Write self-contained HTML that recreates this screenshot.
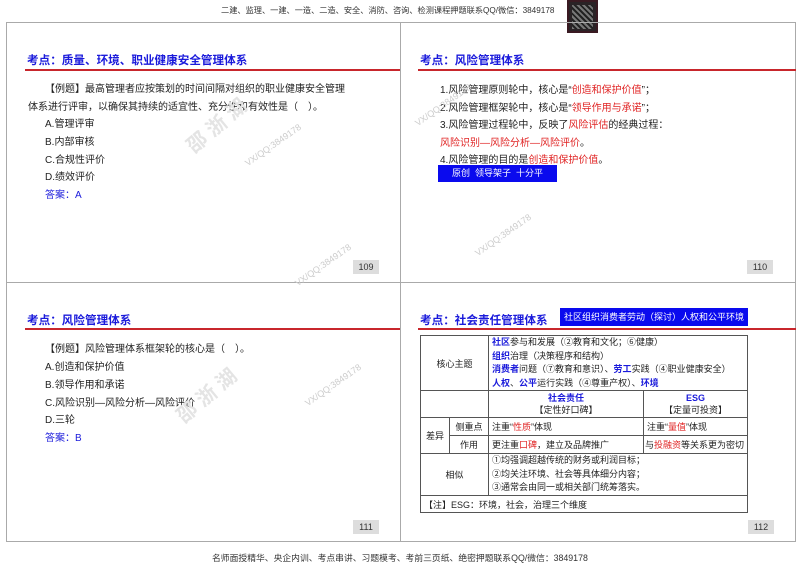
<!DOCTYPE html>
<html><head><meta charset="utf-8"><style>
*{margin:0;padding:0;box-sizing:border-box}
body{width:800px;height:566px;background:#fff;position:relative;overflow:hidden;font-family:"Liberation Sans","Noto Sans CJK SC",sans-serif;color:#222}
.a{position:absolute;white-space:nowrap}
.hdr{font-size:8.2px;color:#333;top:4px;left:221px}
.ftr{font-size:8.8px;color:#333;top:551px;left:212px}
.frame{position:absolute;left:6px;top:22px;width:790px;height:520px;border:1px solid #aaa}
.vl{position:absolute;left:400px;top:22px;width:1px;height:520px;background:#aaa}
.hl{position:absolute;left:6px;top:282px;width:790px;height:1px;background:#aaa}
.t{font-size:11.6px;font-weight:bold;color:#1a1adb}
.rl{position:absolute;height:2px;background:#c8262c}
.p{font-size:10px;color:#222}
.r{color:#e02424}
.b{color:#1a1adb;font-weight:bold}
.pg{position:absolute;background:#ddd;font-size:9px;color:#333;text-align:center;line-height:14px;width:26px;height:14px}
.box{position:absolute;background:#0a0aee;color:#fff;font-size:9px;text-align:center;white-space:nowrap}
table{position:absolute;left:420px;top:335px;width:327px;border-collapse:collapse;font-size:9px;table-layout:fixed}
td{border:1px solid #555;padding:0 3px;white-space:nowrap;overflow:hidden}
.wm{position:absolute;color:#ccc;font-size:9px;transform:rotate(-35deg);white-space:nowrap}
.wm2{position:absolute;color:#e4e4e4;font-size:20px;font-weight:bold;transform:rotate(-40deg);white-space:nowrap}
</style></head><body>
<div class="a hdr">二建、监理、一建、一造、二造、安全、消防、咨询、检测课程押题联系QQ/微信：3849178</div>
<div style="position:absolute;left:567px;top:0;width:31px;height:33px;background:#2a2326;border:2px solid #3a1a22"><div style="position:absolute;left:3px;top:3px;width:21px;height:24px;background:repeating-linear-gradient(45deg,#777 0 2px,#222 2px 4px)"></div></div>
<div class="frame"></div><div class="vl"></div><div class="hl"></div>

<!-- TL -->
<div class="a t" style="left:27px;top:52px">考点：质量、环境、职业健康安全管理体系</div>
<div class="rl" style="left:25px;top:69px;width:375px"></div>
<div class="a p" style="left:45px;top:80px">【例题】最高管理者应按策划的时间间隔对组织的职业健康安全管理</div>
<div class="a p" style="left:28px;top:98px">体系进行评审，以确保其持续的适宜性、充分性和有效性是（　）。</div>
<div class="a p" style="left:45px;top:115px">A.管理评审</div>
<div class="a p" style="left:45px;top:133px">B.内部审核</div>
<div class="a p" style="left:45px;top:151px">C.合规性评价</div>
<div class="a p" style="left:45px;top:168px">D.绩效评价</div>
<div class="a p" style="left:45px;top:186px;color:#1a1adb">答案：A</div>
<div class="pg" style="left:353px;top:260px">109</div>
<div class="wm" style="left:240px;top:140px">VX/QQ:3849178</div>
<div class="wm" style="left:290px;top:260px">VX/QQ:3849178</div>
<div class="wm2" style="left:180px;top:110px">邵 浙 湖</div>

<!-- TR -->
<div class="a t" style="left:420px;top:52px">考点：风险管理体系</div>
<div class="rl" style="left:418px;top:69px;width:378px"></div>
<div class="a p" style="left:440px;top:81px">1.风险管理原则轮中，核心是“<span class="r">创造和保护价值</span>”；</div>
<div class="a p" style="left:440px;top:99px">2.风险管理框架轮中，核心是“<span class="r">领导作用与承诺</span>”；</div>
<div class="a p" style="left:440px;top:116px">3.风险管理过程轮中，反映了<span class="r">风险评估</span>的经典过程：</div>
<div class="a p r" style="left:440px;top:134px">风险识别—风险分析—风险评价<span style="color:#222">。</span></div>
<div class="a p" style="left:440px;top:151px">4.风险管理的目的是<span class="r">创造和保护价值</span>。</div>
<div class="box" style="left:438px;top:165px;width:119px;height:17px;line-height:17px">原创&nbsp; 领导架子&nbsp; 十分平</div>
<div class="pg" style="left:747px;top:260px">110</div>
<div class="wm" style="left:410px;top:100px">VX/QQ:3849178</div>
<div class="wm" style="left:470px;top:230px">VX/QQ:3849178</div>

<!-- BL -->
<div class="a t" style="left:27px;top:312px">考点：风险管理体系</div>
<div class="rl" style="left:25px;top:328px;width:375px"></div>
<div class="a p" style="left:45px;top:340px">【例题】风险管理体系框架轮的核心是（　）。</div>
<div class="a p" style="left:45px;top:358px">A.创造和保护价值</div>
<div class="a p" style="left:45px;top:376px">B.领导作用和承诺</div>
<div class="a p" style="left:45px;top:394px">C.风险识别—风险分析—风险评价</div>
<div class="a p" style="left:45px;top:411px">D.三轮</div>
<div class="a p" style="left:45px;top:429px;color:#1a1adb">答案：B</div>
<div class="pg" style="left:353px;top:520px">111</div>
<div class="wm" style="left:300px;top:380px">VX/QQ:3849178</div>
<div class="wm2" style="left:170px;top:380px">邵 浙 湖</div>

<!-- BR -->
<div class="a t" style="left:420px;top:312px">考点：社会责任管理体系</div>
<div class="box" style="left:560px;top:308px;width:188px;height:18px;line-height:18px">社区组织消费者劳动（探讨）人权和公平环境</div>
<div class="rl" style="left:418px;top:328px;width:378px"></div>
<table>
<colgroup><col style="width:29px"><col style="width:39px"><col style="width:155px"><col style="width:104px"></colgroup>
<tr style="height:55px"><td colspan="2" style="text-align:center">核心主题</td><td colspan="2" style="line-height:13.5px"><span class="b">社区</span>参与和发展（②教育和文化；⑥健康）<br><span class="b">组织</span>治理（决策程序和结构）<br><span class="b">消费者</span>问题（⑦教育和意识）、<span class="b">劳工</span>实践（④职业健康安全）<br><span class="b">人权</span>、<span class="b">公平</span>运行实践（④尊重产权）、<span class="b">环境</span></td></tr>
<tr style="height:27px"><td colspan="2"></td><td style="text-align:center;line-height:12px"><span class="b">社会责任</span><br>【定性好口碑】</td><td style="text-align:center;line-height:12px"><span class="b">ESG</span><br>【定量可投资】</td></tr>
<tr style="height:18px"><td rowspan="2" style="text-align:center;padding:0">差异</td><td style="text-align:center;padding:0">侧重点</td><td>注重“<span class="r">性质</span>”体现</td><td>注重“<span class="r">量值</span>”体现</td></tr>
<tr style="height:18px"><td style="text-align:center;padding:0">作用</td><td>更注重<span class="r">口碑</span>，建立及品牌推广</td><td style="padding:0 1px">与<span class="r">投融资</span>等关系更为密切</td></tr>
<tr style="height:42px"><td colspan="2" style="text-align:center">相似</td><td colspan="2" style="line-height:13.5px">①均强调超越传统的财务或利润目标；<br>②均关注环境、社会等具体细分内容；<br>③通常会由同一或相关部门统筹落实。</td></tr>
<tr style="height:17px"><td colspan="4">【注】ESG：环境，社会，治理三个维度</td></tr>
</table>
<div class="pg" style="left:748px;top:520px">112</div>

<div class="a ftr">名师面授精华、央企内训、考点串讲、习题模考、考前三页纸、绝密押题联系QQ/微信：3849178</div>
</body></html>
